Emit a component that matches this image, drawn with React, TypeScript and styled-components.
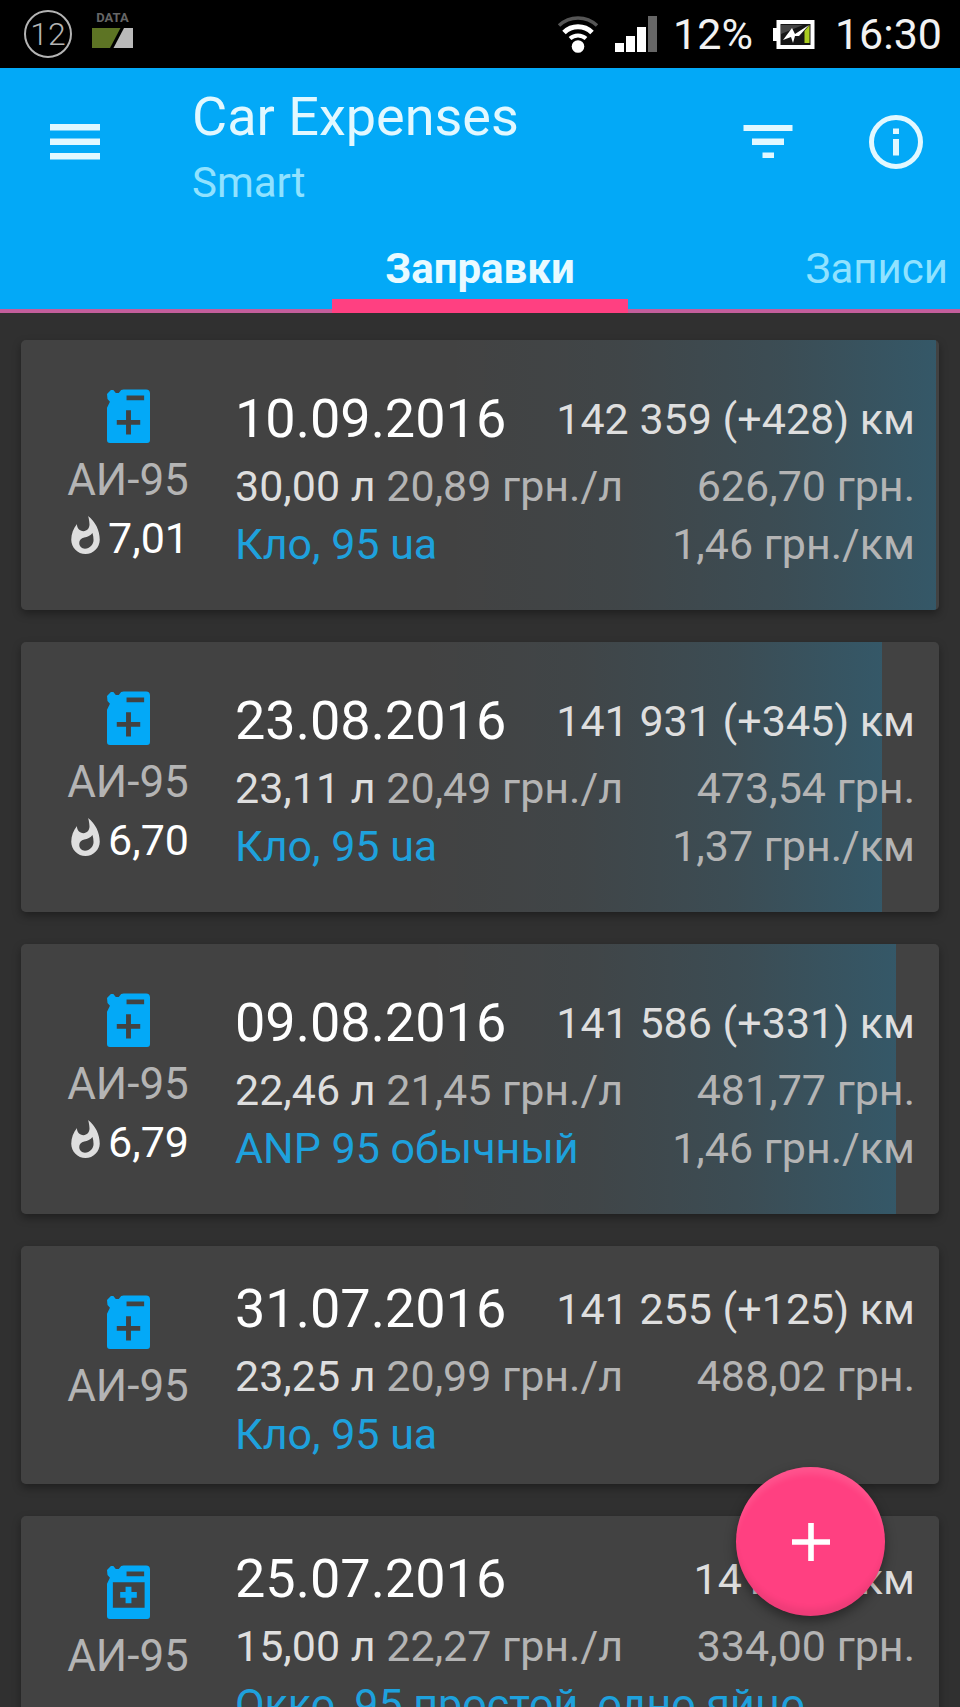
import React from "react";
import styled, { createGlobalStyle } from "styled-components";

const color = {
  primary: "#03a9f7",
  accent: "#ff4081",
  page: "#303030",
  card: "#424242",
  link: "#1ea1dd",
  bright: "#dedede",
  muted: "#b4b4b4",
};

const GlobalStyle = createGlobalStyle`
  *, *::before, *::after { box-sizing: border-box; }
  body {
    margin: 0;
    background: ${color.page};
    color: #fff;
    font-family: Roboto, "Liberation Sans", sans-serif;
    font-size: 43px;
    line-height: 58px;
  }
  button { border: 0; padding: 0; background: none; color: inherit; font: inherit; cursor: pointer; }
  h1, h2, p { margin: 0; font-weight: 400; }
  svg { display: block; flex: none; }
`;

const Screen = styled.div`
  position: relative;
  display: flex;
  flex-direction: column;
  height: 100vh;
  overflow: hidden;
`;

const StatusBar = styled.div`
  display: flex;
  align-items: center;
  justify-content: space-between;
  height: 68px;
  flex: none;
  padding: 0 18px 0 24px;
  background: #000;
  color: #f2f2f2;
`;

const StatusGroup = styled.div<{ $gap: number }>`
  display: flex;
  align-items: center;
  gap: ${(p) => p.$gap}px;
`;

const CountBadge = styled.span`
  display: flex;
  align-items: center;
  justify-content: center;
  width: 48px;
  height: 48px;
  border: 2px solid #b4b4b4;
  border-radius: 50%;
  color: #b4b4b4;
  font-size: 32px;
  font-weight: 300;
  line-height: 44px;
`;

const DataBadge = styled.span`
  display: flex;
  flex-direction: column;
  align-items: center;
  gap: 4px;
  padding-bottom: 8px;
  color: #666;
  font-size: 13px;
  font-weight: 700;
  line-height: 12px;
`;

const Header = styled.header`
  flex: none;
  background: ${color.primary};
`;

const Toolbar = styled.div`
  display: flex;
  height: 148px;
  padding-right: 32px;
`;

const IconButton = styled.button`
  display: flex;
  align-items: center;
  justify-content: center;
  color: #e2f8ff;
`;

const MenuButton = styled(IconButton)`
  width: 150px;
`;

const ActionButton = styled(IconButton)`
  width: 128px;

  & + & {
    width: 64px;
    margin-left: 32px;
  }
`;

const Titles = styled.div`
  flex: 1;
  padding: 13px 0 0 42px;
`;

const Title = styled.h1`
  color: #e2f8ff;
  font-size: 54px;
  line-height: 72px;
`;

const Subtitle = styled.p`
  color: #90e2ff;
  font-size: 42px;
  line-height: 60px;
`;

const Tabs = styled.nav`
  display: grid;
  grid-template-columns: 1fr auto 1fr;
  height: 97px;
  border-bottom: 4px solid #c35e9b;
`;

const Tab = styled.button<{ $active?: boolean }>`
  grid-column: ${(p) => (p.$active ? 2 : 3)};
  justify-self: end;
  height: 97px;
  padding: ${(p) => (p.$active ? "22px 53px 0" : "22px 12px 14px")};
  border-bottom: ${(p) => (p.$active ? `14px solid ${color.accent}` : "0")};
  color: ${(p) => (p.$active ? "#e9faff" : "#90e2ff")};
  font-size: 42px;
  font-weight: ${(p) => (p.$active ? 700 : 400)};
`;

const List = styled.main`
  flex: 1;
  min-height: 0;
  display: flex;
  flex-direction: column;
  gap: 32px;
  padding: 27px 21px;
  overflow-y: auto;
  scrollbar-width: none;
`;

const Card = styled.article`
  position: relative;
  display: flex;
  align-items: center;
  flex: none;
  padding: 21px 24px 21px 0;
  border-radius: 5px;
  overflow: hidden;
  background: ${color.card};
`;

const CardShadow = styled.div`
  flex: none;
  border-radius: 5px;
  box-shadow: 0 4px 8px rgba(0, 0, 0, 0.35);
`;

const LevelBar = styled.div`
  position: absolute;
  inset: 0 auto 0 0;
  background: linear-gradient(
    to right,
    rgba(3, 169, 244, 0) 46%,
    rgba(3, 169, 244, 0.03) 65%,
    rgba(3, 169, 244, 0.1) 83%,
    rgba(3, 169, 244, 0.21) 100%
  );
`;

const FuelColumn = styled.div`
  position: relative;
  display: flex;
  flex-direction: column;
  align-items: center;
  align-self: flex-start;
  flex: none;
  width: 214px;
  padding: 28px 0 22px;
`;

const FuelName = styled.span`
  margin-top: 8px;
  color: ${color.muted};
  font-size: 44px;
`;

const Consumption = styled.span`
  display: flex;
  align-items: center;
  gap: 8px;
  padding-left: 4px;

  svg { margin-bottom: 6px; }
`;

const Details = styled.div`
  position: relative;
  flex: 1;
  min-width: 0;
  padding-top: 6px;
`;

const Row = styled.div<{ $head?: boolean }>`
  display: flex;
  justify-content: space-between;
  align-items: ${(p) => (p.$head ? "center" : "baseline")};
  margin-bottom: ${(p) => (p.$head ? 2 : 0)}px;
  white-space: nowrap;
`;

const DateText = styled.h2`
  font-size: 54px;
  line-height: 72px;
`;

const Bright = styled.span`
  color: ${color.bright};
`;

const Muted = styled.span`
  color: ${color.muted};
`;

const StationLink = styled.a`
  color: ${color.link};
  text-decoration: none;
`;

const AddButton = styled.button`
  position: absolute;
  right: 75px;
  bottom: 91px;
  display: flex;
  align-items: center;
  justify-content: center;
  width: 149px;
  height: 149px;
  border-radius: 50%;
  background: ${color.accent};
  box-shadow:
    0 5px 12px rgba(0, 0, 0, 0.4),
    inset 0 10px 6px -3px rgba(255, 255, 255, 0.1),
    inset 0 -10px 6px -3px rgba(0, 0, 0, 0.07);
`;

const MenuIcon = () => (
  <svg width="50" height="36" viewBox="0 0 50 36" fill="currentColor" aria-hidden="true">
    <path d="M0 0h50v6.500H0zM0 14.500h50V21H0zM0 29h50v6.500H0z" />
  </svg>
);

const FilterIcon = () => (
  <svg width="50" height="34" viewBox="0 0 50 34" fill="currentColor" aria-hidden="true">
    <path d="M.5 0h49v6H.5zM9 13.500h32V20H9zM19.500 27.500h11.500V33H19.500z" />
  </svg>
);

const InfoIcon = () => (
  <svg width="54" height="54" viewBox="0 0 54 54" aria-hidden="true">
    <circle cx="27" cy="27" r="24.500" fill="none" stroke="currentColor" strokeWidth="5" />
    <path d="M24 13.500h6V19h-6zM24 24h6v16.500h-6z" fill="currentColor" />
  </svg>
);

const DataIcon = () => (
  <svg width="41" height="20" viewBox="0 0 41 20" aria-hidden="true">
    <path d="M0 0h28.500L18 20H0z" fill="#5d7424" />
    <path d="M32 0h9v20H21.500z" fill="#bababa" />
  </svg>
);

const WifiIcon = () => (
  <svg width="42" height="38" viewBox="0 0 42 38" fill="none" stroke="#fff" aria-hidden="true">
    <path d="M2 10.500a27.500 27.500 0 0 1 38 0" stroke="#555" strokeWidth="3.500" />
    <path d="M7 17.500a20 20 0 0 1 28 0" strokeWidth="5" />
    <path d="M13 23.500a12 12 0 0 1 16 0" strokeWidth="4" />
    <circle cx="21" cy="31.500" r="6.300" fill="#fff" stroke="none" />
  </svg>
);

const SignalIcon = () => (
  <svg width="42" height="36" viewBox="0 0 42 36" fill="#fff" aria-hidden="true">
    <path d="M0 27h9v9H0zM11 20h9v16h-9zM22 11h9v25h-9z" />
    <path d="M33 0h9v36h-9z" fill="#666" />
  </svg>
);

const BatteryIcon = () => (
  <svg width="42" height="29" viewBox="0 0 42 29" aria-hidden="true">
    <path d="M0 8h5v13H0z" fill="#fff" />
    <rect x="5.500" y="2" width="34" height="25" fill="#161616" stroke="#fff" strokeWidth="4" />
    <path d="M8 5h22L8 14z" fill="#444" />
    <path d="M36.500 5v18h-5V11z" fill="#a9cc20" />
    <path d="M10 20L19 8l3 6L36 5 26 16l-4 0-2 7-2-6z" fill="#fff" />
  </svg>
);

const canOutline =
  "M3 55Q0 55 0 52V19l2-4 1-2-2.500-3L0 5l4-4 2.500 0L9 4h3l2.500-3Q15.500.500 17 .500H40Q44 .500 44 4.500V52Q44 55 41 55zM20 6.500v5h18v-5z";

const CanIcon = ({ partial }: { partial?: boolean }) => (
  <svg width="43" height="54" viewBox="0 0 44 55" fill="#03a9f7" fillRule="evenodd" aria-hidden="true">
    {partial ? (
      <>
        <path d={`${canOutline}M6 17.500v26h32.500v-26z`} />
        <path d="M19 22h6v5.500h5.500v6H25V39h-6v-5.500h-5.500v-6H19z" />
      </>
    ) : (
      <path d={`${canOutline}M19.500 21.500v10H10v5h9.500v10h5v-10H34v-5h-9.500v-10z`} />
    )}
  </svg>
);

const FlameIcon = () => (
  <svg width="29" height="38" viewBox="4 0.670 16 21.330" fill={color.bright} aria-hidden="true">
    <path d="M13.500.670s.740 2.650.740 4.800c0 2.060-1.350 3.730-3.410 3.730-2.070 0-3.630-1.670-3.630-3.730l.030-.360C5.210 7.510 4 10.620 4 14c0 4.420 3.580 8 8 8s8-3.580 8-8C20 8.610 17.410 3.800 13.500.670zM11.710 19c-1.780 0-3.220-1.400-3.220-3.140 0-1.620 1.050-2.760 2.810-3.120 1.770-.360 3.600-1.210 4.620-2.580.390 1.290.590 2.650.590 4.040 0 2.650-2.150 4.800-4.800 4.800z" />
  </svg>
);

const PlusIcon = () => (
  <svg width="38" height="38" viewBox="0 0 38 38" fill="#fff" aria-hidden="true">
    <path d="M16.200 0h5.600v16.200H38v5.600H21.800V38h-5.600V21.800H0v-5.600h16.200z" />
  </svg>
);

interface Refuel {
  date: string;
  odometer: string;
  volume: string;
  price: string;
  total: string;
  station: string;
  perKm?: string;
  consumption?: string;
  level?: number;
  partial?: boolean;
}

const refuels: Refuel[] = [
  { date: "10.09.2016", odometer: "142 359 (+428) км", volume: "30,00 л", price: "20,89 грн./л", total: "626,70 грн.", station: "Кло, 95 ua", perKm: "1,46 грн./км", consumption: "7,01", level: 99.7 },
  { date: "23.08.2016", odometer: "141 931 (+345) км", volume: "23,11 л", price: "20,49 грн./л", total: "473,54 грн.", station: "Кло, 95 ua", perKm: "1,37 грн./км", consumption: "6,70", level: 93.8 },
  { date: "09.08.2016", odometer: "141 586 (+331) км", volume: "22,46 л", price: "21,45 грн./л", total: "481,77 грн.", station: "ANP 95 обычный", perKm: "1,46 грн./км", consumption: "6,79", level: 95.3 },
  { date: "31.07.2016", odometer: "141 255 (+125) км", volume: "23,25 л", price: "20,99 грн./л", total: "488,02 грн.", station: "Кло, 95 ua" },
  { date: "25.07.2016", odometer: "141 130 км", volume: "15,00 л", price: "22,27 грн./л", total: "334,00 грн.", station: "Окко, 95 простой, одно яйцо", partial: true },
];

const RefuelCard = ({ item }: { item: Refuel }) => (
  <CardShadow>
    <Card>
      {item.level !== undefined && <LevelBar style={{ width: `${item.level}%` }} />}
      <FuelColumn>
        <CanIcon partial={item.partial} />
        <FuelName>АИ-95</FuelName>
        {item.consumption && (
          <Consumption>
            <FlameIcon />
            {item.consumption}
          </Consumption>
        )}
      </FuelColumn>
      <Details>
        <Row $head>
          <DateText>{item.date}</DateText>
          <Bright>{item.odometer}</Bright>
        </Row>
        <Row>
          <span>
            <Bright>{item.volume}</Bright> <Muted>{item.price}</Muted>
          </span>
          <Muted>{item.total}</Muted>
        </Row>
        <Row>
          <StationLink href="#station">{item.station}</StationLink>
          {item.perKm && <Muted>{item.perKm}</Muted>}
        </Row>
      </Details>
    </Card>
  </CardShadow>
);

export default function App() {
  return (
    <Screen>
      <GlobalStyle />
      <StatusBar>
        <StatusGroup $gap={20}>
          <CountBadge>12</CountBadge>
          <DataBadge>
            DATA
            <DataIcon />
          </DataBadge>
        </StatusGroup>
        <StatusGroup $gap={20}>
          <StatusGroup $gap={16}>
            <WifiIcon />
            <SignalIcon />
            <span>12%</span>
          </StatusGroup>
          <BatteryIcon />
          <span>16:30</span>
        </StatusGroup>
      </StatusBar>
      <Header>
        <Toolbar>
          <MenuButton aria-label="Меню">
            <MenuIcon />
          </MenuButton>
          <Titles>
            <Title>Car Expenses</Title>
            <Subtitle>Smart</Subtitle>
          </Titles>
          <ActionButton aria-label="Фильтр">
            <FilterIcon />
          </ActionButton>
          <ActionButton aria-label="Информация">
            <InfoIcon />
          </ActionButton>
        </Toolbar>
        <Tabs>
          <Tab $active>Заправки</Tab>
          <Tab>Записи</Tab>
        </Tabs>
      </Header>
      <List>
        {refuels.map((item) => (
          <RefuelCard key={item.date} item={item} />
        ))}
      </List>
      <AddButton aria-label="Добавить заправку">
        <PlusIcon />
      </AddButton>
    </Screen>
  );
}
